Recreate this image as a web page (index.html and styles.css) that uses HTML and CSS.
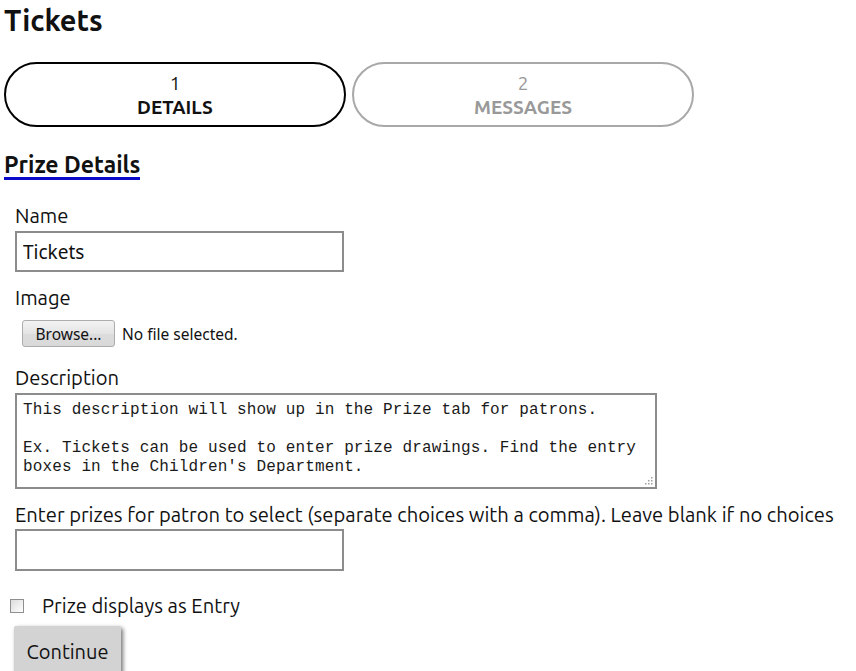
FILE: index.html
```html
<!DOCTYPE html>
<html lang="en">
<head>
<meta charset="utf-8">
<title>Tickets</title>
<link rel="stylesheet" href="styles.css">
</head>
<body>
<div class="page">
  <h1 class="title">Tickets</h1>
  <div class="steps">
    <div class="step step-active"><span class="step-num">1</span><span class="step-name">DETAILS</span></div>
    <div class="step step-inactive"><span class="step-num">2</span><span class="step-name">MESSAGES</span></div>
  </div>
  <h2 class="section-title">Prize Details</h2>
  <form class="form">
    <div class="field">
      <label class="label">Name</label>
      <input class="text-input" type="text" value="Tickets">
    </div>
    <div class="field">
      <label class="label">Image</label>
      <div class="file-row">
        <button type="button" class="browse-btn">Browse...</button>
        <span class="file-status">No file selected.</span>
      </div>
    </div>
    <div class="field">
      <label class="label">Description</label>
      <div class="textarea-wrap">
        <textarea class="textarea">This description will show up in the Prize tab for patrons.

Ex. Tickets can be used to enter prize drawings. Find the entry boxes in the Children's Department.</textarea>
        <svg class="grip" width="9" height="9" viewBox="0 0 9 9" aria-hidden="true">
          <rect x="7" y="1" width="1.5" height="1.5" fill="#a0a0a0"/>
          <rect x="4" y="4" width="1.5" height="1.5" fill="#a0a0a0"/>
          <rect x="7" y="4" width="1.5" height="1.5" fill="#a0a0a0"/>
          <rect x="1" y="7" width="1.5" height="1.5" fill="#a0a0a0"/>
          <rect x="4" y="7" width="1.5" height="1.5" fill="#a0a0a0"/>
          <rect x="7" y="7" width="1.5" height="1.5" fill="#a0a0a0"/>
        </svg>
      </div>
    </div>
    <div class="field">
      <label class="label">Enter prizes for patron to select (separate choices with a comma). Leave blank if no choices</label>
      <input class="text-input text-input-tall" type="text" value="">
    </div>
    <div class="check-row">
      <span class="checkbox"></span>
      <span class="check-label">Prize displays as Entry</span>
    </div>
    <button type="button" class="continue-btn">Continue</button>
  </form>
</div>
</body>
</html>
```
FILE: styles.css
```css
html, body {
  margin: 0;
  padding: 0;
  background: #ffffff;
  overflow: hidden;
}
body {
  font-family: "Ubuntu", "Roboto", "Noto Sans", sans-serif;
  color: #111111;
}
.page {
  padding: 0 4px;
}
.title {
  margin: 0;
  padding-top: 2px;
  font-size: 29px;
  line-height: 36px;
  font-weight: 700;
  color: #111;
}
.steps {
  display: flex;
  gap: 6px;
  margin-top: 24px;
}
.step {
  box-sizing: border-box;
  width: 342px;
  height: 65px;
  border: 2px solid #000;
  border-radius: 33px;
  display: flex;
  flex-direction: column;
  align-items: center;
  padding-top: 7px;
  font-size: 19px;
  line-height: 24px;
  font-weight: 700;
}
.step-num {
  font-weight: 400;
}
.step-active {
  color: #111;
}
.step-inactive {
  border-color: #a8a8a8;
  color: #999999;
}
.section-title {
  display: inline-block;
  margin: 26px 0 0 0;
  font-size: 23px;
  line-height: 24px;
  font-weight: 700;
  border-bottom: 3px solid #0a0ac8;
  padding-bottom: 0;
}
.form {
  margin: 0;
}
.field {
  display: flex;
  flex-direction: column;
  align-items: flex-start;
  padding-left: 11px;
}
.field:first-child {
  margin-top: 24px;
}
.label {
  font-size: 20.2px;
  line-height: 24px;
  color: #111;
  white-space: nowrap;
}
.text-input {
  box-sizing: border-box;
  width: 329px;
  height: 41px;
  margin: 3px 0 14px 0;
  border: 2px solid #8c8c8c;
  padding: 0 6px;
  font-family: "Noto Sans", "DejaVu Sans", sans-serif;
  font-size: 19px;
  color: #111;
  background: #fff;
  outline: none;
}
.text-input-tall {
  height: 42px;
  margin-top: 2px;
}
.file-row {
  display: flex;
  align-items: center;
  gap: 7px;
  margin: 10px 0 19px 7px;
}
.browse-btn {
  box-sizing: border-box;
  width: 93px;
  height: 27px;
  border: 1px solid #acacac;
  border-radius: 3px;
  background: linear-gradient(#f3f3f3, #e4e4e4 50%, #dcdcdc 51%, #d9d9d9);
  font-family: "Noto Sans", "DejaVu Sans", sans-serif;
  font-size: 15.5px;
  color: #111;
  padding: 0;
}
.file-status {
  font-family: "Noto Sans", "DejaVu Sans", sans-serif;
  font-size: 15.5px;
  color: #111;
}
.textarea-wrap {
  position: relative;
  margin: 3px 0 14px 0;
}
.textarea {
  display: block;
  box-sizing: border-box;
  width: 642px;
  height: 96px;
  margin: 0;
  border: 2px solid #8c8c8c;
  padding: 6px 6px;
  font-family: "Courier New", "Nimbus Mono PS", "FreeMono", "Liberation Mono", monospace;
  font-size: 16px;
  letter-spacing: 0.13px;
  line-height: 19px;
  color: #1a1a1a;
  background: #fff;
  outline: none;
  resize: none;
}
.grip {
  position: absolute;
  right: 4px;
  bottom: 4px;
}
.check-row {
  display: flex;
  align-items: center;
  margin: 9px 0 0 6px;
}
.checkbox {
  box-sizing: border-box;
  width: 14px;
  height: 14px;
  border: 1px solid #8f8f8f;
  background: linear-gradient(135deg, #dcdcdc, #ffffff);
}
.check-label {
  margin-left: 18px;
  font-size: 20.2px;
  line-height: 24px;
  color: #111;
}
.continue-btn {
  display: block;
  margin: 8px 0 0 10px;
  width: 107px;
  height: 52px;
  border: none;
  border-radius: 2px 2px 0 0;
  background: #d3d3d3;
  box-shadow: 2px 2px 4px rgba(0, 0, 0, 0.55);
  font-family: "Ubuntu", "Roboto", sans-serif;
  font-size: 20px;
  color: #111;
  padding: 0 0 2px 0;
}
```
